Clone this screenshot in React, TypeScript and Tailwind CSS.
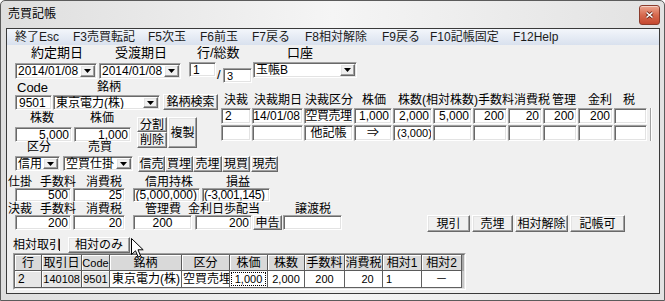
import React from "react";

type Kids = { className?: string; children?: React.ReactNode };

const sunk =
  "bg-white border border-t-[#a0a0a0] border-l-[#a0a0a0] border-r-white border-b-white shadow-[inset_1px_1px_0_#696969,inset_-1px_-1px_0_#e3e3e3]";
const raised =
  "bg-[#f0f0f0] border border-t-white border-l-white border-r-[#696969] border-b-[#696969] shadow-[inset_-1px_-1px_0_#a0a0a0,inset_1px_1px_0_#e3e3e3]";

function Field({ className = "", children, align = "left" }: Kids & { align?: "left" | "right" | "center" }) {
  const j =
    align === "right" ? "justify-end pr-[2px]" : align === "center" ? "justify-center" : "justify-start pl-[3px]";
  return (
    <div className={`${sunk} shrink-0 flex items-center overflow-hidden whitespace-nowrap leading-[12px] ${j} ${className}`}>
      {children}
    </div>
  );
}

function Combo({ className = "", children }: Kids) {
  return (
    <div className={`${sunk} shrink-0 flex items-stretch ${className}`}>
      <span className="flex-1 flex items-center pl-[2px] overflow-hidden whitespace-nowrap leading-[12px]">{children}</span>
      <span className={`${raised} w-[15px] my-[1px] mr-[1px] flex items-center justify-center`}>
        <svg width="7" height="4" viewBox="0 0 7 4">
          <path d="M0 0h7L3.5 4z" fill="#000" />
        </svg>
      </span>
    </div>
  );
}

function Btn({ className = "", children }: Kids) {
  return (
    <div className={`${raised} shrink-0 flex items-center justify-center whitespace-nowrap leading-[12px] ${className}`}>
      {children}
    </div>
  );
}

function L({ className = "", children }: Kids) {
  return <span className={`shrink-0 whitespace-nowrap ${className}`}>{children}</span>;
}

const menu: [string, string][] = [
  ["終了Esc", "ml-[8px] w-[58px]"],
  ["F3売買転記", "w-[75px]"],
  ["F5次玉", "w-[52px]"],
  ["F6前玉", "w-[52px]"],
  ["F7戻る", "w-[53px]"],
  ["F8相対解除", "w-[77px]"],
  ["F9戻る", "w-[48px]"],
  ["F10記帳固定", "w-[83px]"],
  ["F12Help", ""],
];

const kW = ["w-[30px]", "w-[51px]", "w-[49px]", "w-[38px]", "w-[39px]", "w-[39px]", "w-[34px]", "w-[34px]", "w-[34px]", "w-[35px]", "w-[33px]"];
type Cell = [string, "left" | "right" | "center", string?];
const kRow1: Cell[] = [
  ["2", "left"],
  ["14/01/08", "right", "pr-[1px]"],
  ["空買売埋", "center", "tracking-[-0.5px]"],
  ["1,000", "right"],
  ["2,000", "right"],
  ["5,000", "right"],
  ["200", "right"],
  ["20", "right"],
  ["200", "right"],
  ["200", "right"],
  ["", "left"],
];
const kRow2: Cell[] = [
  ["", "left"],
  ["", "left"],
  ["他記帳", "center"],
  ["⇒", "center"],
  ["(3,000)", "left", "pl-[1px] text-[11px]"],
  ["", "left"],
  ["", "left"],
  ["", "left"],
  ["", "left"],
  ["", "left"],
  ["", "left"],
];

const gW = ["w-[27px]", "w-[40px]", "w-[28px]", "w-[72px]", "w-[48px]", "w-[38px]", "w-[37px]", "w-[40px]", "w-[38px]", "w-[39px]", "w-[40px]"];
const gHead = ["行", "取引日", "Code", "銘柄", "区分", "株価", "株数", "手数料", "消費税", "相対1", "相対2"];

const headCell =
  "shrink-0 bg-[#d9d9d9] border-r border-b border-r-[#5a5a5a] border-b-[#5a5a5a] shadow-[inset_1px_1px_0_#ffffff] flex items-center justify-center leading-[12px] overflow-hidden whitespace-nowrap";
const fixCell =
  "shrink-0 bg-[#e6e6e6] border-r border-b border-r-[#5a5a5a] border-b-[#5a5a5a] shadow-[inset_1px_1px_0_#ffffff] flex items-center leading-[12px] overflow-hidden whitespace-nowrap";
const dataCell =
  "shrink-0 bg-white border-r border-b border-r-[#606060] border-b-[#606060] flex items-center leading-[12px] overflow-hidden whitespace-nowrap";

export default function App() {
  return (
    <div className="w-[665px] h-[301px] overflow-hidden border border-[#5b5b5b] rounded-t-[5px] bg-linear-to-r from-[#dedede] via-[#f5f5f5] to-[#e2e2e2] font-['Liberation_Sans','Noto_Sans_CJK_JP',sans-serif] text-[12px] text-black flex flex-col">
      {/* title bar */}
      <div className="h-[27px] shrink-0 flex items-start">
        <span className="ml-[7px] mt-[6px] leading-[14px]">売買記帳</span>
        <div className="ml-auto mr-[4px] mt-[4px] w-[21px] h-[20px] rounded-[3px] border border-[#8a3b2c] bg-linear-to-b from-[#eba58f] via-[#d76a4f] to-[#c5472f] shadow-[inset_0_1px_0_rgba(255,255,255,0.5)] flex items-center justify-center">
          <svg width="9" height="8" viewBox="0 0 9 8">
            <path d="M1.5 1.5l6 5M7.5 1.5l-6 5" stroke="#6a2416" strokeWidth="3" />
            <path d="M1.5 1.5l6 5M7.5 1.5l-6 5" stroke="#fff" strokeWidth="1.6" />
          </svg>
        </div>
      </div>

      {/* client area */}
      <div className="ml-[5px] w-[654px] h-[266px] shrink-0 border border-[#3a3a3a] bg-[#f0f0f0] flex flex-col">
        <div className="h-[16px] shrink-0 flex items-center bg-linear-to-b from-[#f3f6fb] to-[#d9e1ee] leading-[16px] text-[#1b1b1b]">
          {menu.map(([t, c]) => (
            <L key={t} className={c}>
              {t}
            </L>
          ))}
        </div>

        <div className="mt-[2px] h-[12px] shrink-0 flex items-center text-[13px] leading-[12px]">
          <L className="ml-[24px] w-[84px]">約定期日</L>
          <L className="w-[82px]">受渡期日</L>
          <L className="w-[90px]">行/総数</L>
          <L>口座</L>
        </div>

        <div className="mt-[4px] h-[18px] shrink-0 flex items-start">
          <Combo className="ml-[8px] w-[82px] h-[16px]">2014/01/08</Combo>
          <Combo className="ml-[2px] w-[82px] h-[16px]">2014/01/08</Combo>
          <Field className="ml-[8px] w-[27px] h-[15px] -mt-[1px]">1</Field>
          <L className="ml-[1px] w-[6px] mt-[5px] text-[13px] leading-[13px]">/</L>
          <Field className="w-[29px] h-[15px] mt-[5px] text-[11px]">3</Field>
          <Combo className="ml-[1px] w-[104px] h-[16px] -mt-[1px]">玉帳B</Combo>
        </div>

        <div className="h-[60px] shrink-0 flex">
          <div className="w-[214px] shrink-0 flex flex-col">
            <div className="h-[13px] flex items-center leading-[13px]">
              <L className="ml-[10px] w-[80px] text-[13px]">Code</L>
              <L>銘柄</L>
            </div>
            <div className="h-[16px] flex items-start">
              <Field className="ml-[8px] mt-[1px] w-[37px] h-[15px]">9501</Field>
              <Combo className="ml-[1px] mt-[1px] w-[107px] h-[15px]">東京電力(株)</Combo>
              <Btn className="ml-[3px] w-[55px] h-[16px]">銘柄検索</Btn>
            </div>
            <div className="h-[31px] flex">
              <div className="w-[130px] shrink-0 flex flex-col">
                <div className="mt-[2px] h-[12px] flex items-center leading-[12px]">
                  <L className="ml-[23px] w-[60px]">株数</L>
                  <L>株価</L>
                </div>
                <div className="mt-[3px] flex">
                  <Field align="right" className="ml-[8px] w-[57px] h-[15px]">
                    5,000
                  </Field>
                  <Field align="right" className="ml-[2px] w-[57px] h-[15px]">
                    1,000
                  </Field>
                </div>
              </div>
              <div className="mt-[7px] flex flex-col">
                <Btn className="w-[30px] h-[15px]">分割</Btn>
                <Btn className="w-[30px] h-[16px]">削除</Btn>
              </div>
              <Btn className="mt-[7px] ml-[1px] w-[29px] h-[31px]">複製</Btn>
            </div>
          </div>

          <div className="mt-[13px] flex flex-col">
            <div className="h-[13px] flex items-center leading-[13px]">
              <L className="ml-[3px] w-[30px]">決裁</L>
              <L className="w-[51px]">決裁期日</L>
              <L className="w-[57px]">決裁区分</L>
              <L className="w-[36px]">株価</L>
              <L className="w-[80px]">株数(相対株数)</L>
              <L className="w-[36px]">手数料</L>
              <L className="w-[38px]">消費税</L>
              <L className="w-[36px]">管理</L>
              <L className="w-[35px]">金利</L>
              <L>税</L>
            </div>
            <div className="mt-[1px] flex">
              <div className="flex flex-col gap-[1px]">
                {[kRow1, kRow2].map((row, r) => (
                  <div key={r} className="h-[16px] flex gap-[1px]">
                    {row.map(([t, a, x], i) => (
                      <Field key={i} align={a} className={`${kW[i]} h-[16px] ${x ?? ""}`}>
                        {t}
                      </Field>
                    ))}
                  </div>
                ))}
              </div>
              <div className="ml-[3px] w-[2px] h-[33px] border-l border-[#a0a0a0] bg-white" />
            </div>
          </div>
        </div>

        <div className="h-[12px] shrink-0 flex items-center leading-[12px]">
          <L className="ml-[20px] w-[61px]">区分</L>
          <L>売買</L>
        </div>

        <div className="mt-[3px] h-[16px] shrink-0 flex items-start">
          <Combo className="ml-[8px] w-[45px] h-[15px]">信用</Combo>
          <Combo className="ml-[3px] w-[70px] h-[15px]">空買仕掛</Combo>
          <Btn className="ml-[5px] w-[27px] h-[16px]">信売</Btn>
          <Btn className="w-[28px] h-[16px]">買埋</Btn>
          <Btn className="w-[29px] h-[16px]">売埋</Btn>
          <Btn className="w-[28px] h-[16px]">現買</Btn>
          <Btn className="ml-[1px] w-[27px] h-[16px]">現売</Btn>
        </div>

        <div className="mt-[4px] h-[12px] shrink-0 flex items-center leading-[12px]">
          <L className="ml-[1px] w-[32px]">仕掛</L>
          <L className="w-[46px]">手数料</L>
          <L className="w-[59px]">消費税</L>
          <L className="w-[81px]">信用持株</L>
          <L>損益</L>
        </div>

        <div className="h-[14px] shrink-0 flex">
          <Field align="right" className="ml-[8px] w-[56px] h-[14px]">
            500
          </Field>
          <Field align="right" className="ml-[2px] w-[52px] h-[14px]">
            25
          </Field>
          <Field align="right" className="ml-[8px] w-[67px] h-[14px]">
            (5,000,000)
          </Field>
          <Field className="ml-[2px] w-[68px] h-[14px] !pl-[1px] tracking-[-0.4px]">(-3,001,145)</Field>
        </div>

        <div className="mt-[1px] h-[12px] shrink-0 flex items-center leading-[12px]">
          <L className="ml-[1px] w-[32px]">決裁</L>
          <L className="w-[46px]">手数料</L>
          <L className="w-[59px]">消費税</L>
          <L className="w-[43px]">管理費</L>
          <L className="w-[107px]">金利日歩配当</L>
          <L>譲渡税</L>
        </div>

        <div className="h-[17px] shrink-0 flex items-start">
          <Field align="right" className="ml-[8px] w-[56px] h-[15px]">
            200
          </Field>
          <Field align="right" className="ml-[2px] w-[52px] h-[15px]">
            20
          </Field>
          <Field align="center" className="ml-[8px] w-[59px] h-[15px]">
            200
          </Field>
          <Field align="right" className="ml-[3px] w-[57px] h-[15px]">
            200
          </Field>
          <Btn className="ml-[1px] w-[29px] h-[15px]">申告</Btn>
          <Field className="ml-[1px] w-[59px] h-[15px]" />
          <Btn className="ml-[85px] w-[43px] h-[17px]">現引</Btn>
          <Btn className="ml-[2px] w-[41px] h-[17px]">売埋</Btn>
          <Btn className="ml-[2px] w-[53px] h-[17px]">相対解除</Btn>
          <Btn className="ml-[2px] w-[55px] h-[17px]">記帳可</Btn>
        </div>

        <div className="relative h-[21px] shrink-0 flex items-end">
          <L className="ml-[6px] w-[46px] mb-[1px] leading-[14px]">相対取引</L>
          <span className="w-[1px] h-[12px] mb-[2px] bg-[#222]" />
          <Btn className="ml-[8px] w-[62px] h-[16px]">相対のみ</Btn>
          <svg className="absolute left-[124px] top-[6px]" width="13" height="20" viewBox="0 0 13 20">
            <path d="M0.5 0.5V16.5L4.5 12.8L7.2 19L9.6 18L7 11.8H12.2Z" fill="#fff" stroke="#000" strokeWidth="1" strokeLinejoin="round" />
          </svg>
        </div>

        <div className="ml-[6px] w-[453px] h-[37px] shrink-0 border border-t-[#a0a0a0] border-l-[#a0a0a0] border-r-white border-b-white">
          <div className="h-full border border-t-[#696969] border-l-[#696969] border-r-[#e3e3e3] border-b-[#e3e3e3] flex flex-col bg-[#c8c8c8]">
            <div className="h-[16px] flex">
              {gHead.map((h, i) => (
                <div key={h} className={`${headCell} ${gW[i]} ${h === "Code" ? "text-[11px]" : ""}`}>
                  {h}
                </div>
              ))}
              <div className="flex-1 bg-[#a8a8a8]" />
            </div>
            <div className="h-[17px] flex">
              <div className={`${fixCell} ${gW[0]} pl-[3px]`}>2</div>
              <div className={`${fixCell} ${gW[1]} justify-end pr-[1px] text-[11px]`}>140108</div>
              <div className={`${fixCell} ${gW[2]} justify-center text-[11px]`}>9501</div>
              <div className={`${dataCell} ${gW[3]} pl-[2px]`}>東京電力(株)</div>
              <div className={`${dataCell} ${gW[4]} pl-[1px]`}>空買売埋</div>
              <div className={`${dataCell} ${gW[5]}`}>
                <span className="flex-1 self-stretch m-[1px] border border-dotted border-black flex items-center justify-center text-[11px]">
                  1,000
                </span>
              </div>
              <div className={`${dataCell} ${gW[6]} justify-center text-[11px]`}>2,000</div>
              <div className={`${dataCell} ${gW[7]} justify-center text-[11px]`}>200</div>
              <div className={`${dataCell} ${gW[8]} justify-center pl-[8px] text-[11px]`}>20</div>
              <div className={`${dataCell} ${gW[9]} pl-[3px] text-[11px]`}>1</div>
              <div className={`${dataCell} ${gW[10]} justify-center`}>－</div>
              <div className="flex-1 bg-[#c8c8c8]" />
            </div>
          </div>
        </div>
      </div>
    </div>
  );
}
